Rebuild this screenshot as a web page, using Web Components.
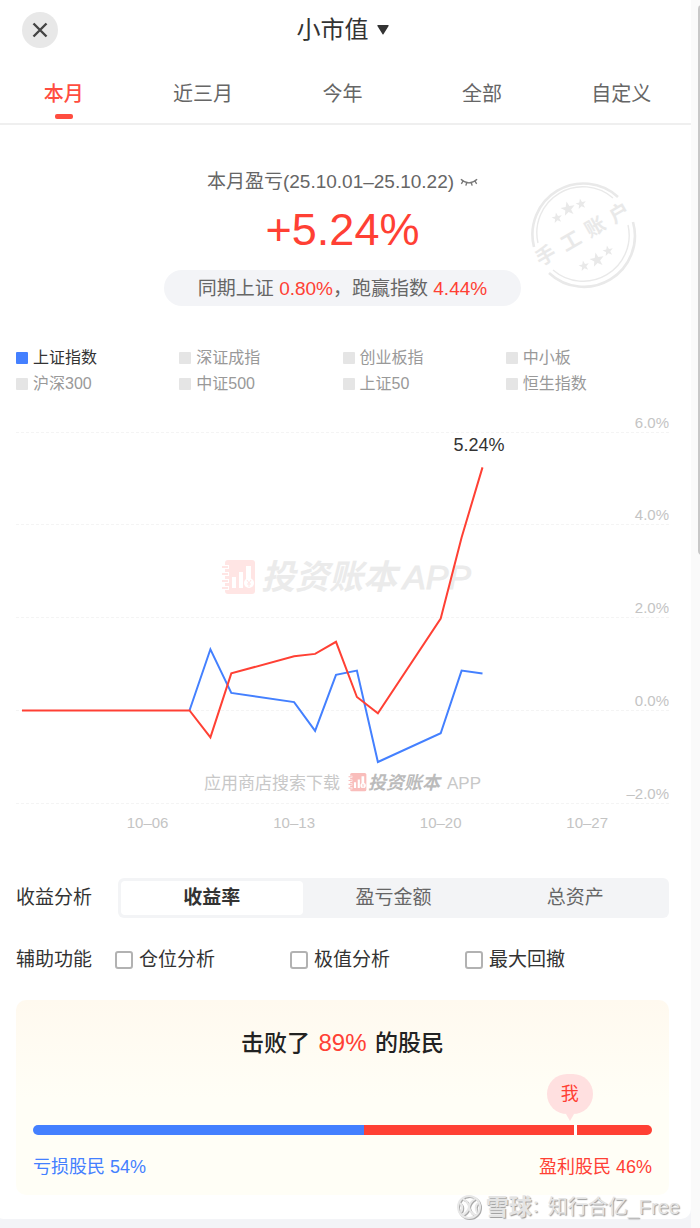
<!DOCTYPE html>
<html lang="zh-CN">
<head>
<meta charset="utf-8">
<meta name="viewport" content="width=device-width, initial-scale=1">
<title>小市值</title>
<style>
    html, body {
        margin: 0;
    }
    body {
        min-height: 100vh;
        display: grid;
        grid-template-columns: 1fr 9px;
        background: #f3f4f7;
        color: #333;
        font: 19px/28px "Liberation Sans", "Noto Sans CJK SC", sans-serif;
    }
</style>
</head>
<body>
<account-page>
    <page-header>小市值</page-header>
    <range-tabs>
        <range-tab active>本月</range-tab>
        <range-tab>近三月</range-tab>
        <range-tab>今年</range-tab>
        <range-tab>全部</range-tab>
        <range-tab>自定义</range-tab>
    </range-tabs>
    <profit-summary>
        <span slot="period">本月盈亏(25.10.01–25.10.22)</span>
        <span slot="value">+5.24%</span>
        同期上证 <b>0.80%</b>，跑赢指数 <b>4.44%</b>
    </profit-summary>
    <index-legend>
        <index-item active>上证指数</index-item>
        <index-item>深证成指</index-item>
        <index-item>创业板指</index-item>
        <index-item>中小板</index-item>
        <index-item>沪深300</index-item>
        <index-item>中证500</index-item>
        <index-item>上证50</index-item>
        <index-item>恒生指数</index-item>
    </index-legend>
    <profit-chart></profit-chart>
    <option-row gap="wide">
        <span slot="label">收益分析</span>
        <segment-group>
            <segment-item active>收益率</segment-item>
            <segment-item>盈亏金额</segment-item>
            <segment-item>总资产</segment-item>
        </segment-group>
    </option-row>
    <option-row>
        <span slot="label">辅助功能</span>
        <check-group>
            <check-option>仓位分析</check-option>
            <check-option>极值分析</check-option>
            <check-option>最大回撤</check-option>
        </check-group>
    </option-row>
    <rank-card>
        <span slot="title">击败了 <b>89%</b> 的股民</span>
        <span slot="loss">亏损股民 54%</span>
        <span slot="gain">盈利股民 46%</span>
    </rank-card>
</account-page>
<scroll-rail></scroll-rail>
<source-mark>知行合亿_Free</source-mark>

<script>
function define(name, html, setup) {
    const template = document.createElement("template");
    template.innerHTML = html;

    customElements.define(name, class extends HTMLElement {
        constructor() {
            super();
            this.attachShadow({mode: "open"});
            this.shadowRoot.appendChild(template.content.cloneNode(true));
        }

        connectedCallback() {
            if (setup) setup(this, this.shadowRoot);
        }
    });
}

// only one child of the group is active at a time
function selectOne(host) {
    host.addEventListener("click", (event) => {
        const item = event.target.closest(host.localName + " > *");
        if (!item) return;
        for (const child of host.children) {
            child.toggleAttribute("active", child === item);
        }
    });
}

define("account-page", /* html */`
    <style>
        :host {
            display: block;
            align-self: start;
            margin-left: -6px;
            padding-bottom: 24px;
            background: white;
            border-radius: 0 0 10px 10px;
        }
    </style>
    <slot></slot>
`);

define("page-header", /* html */`
    <style>
        :host {
            display: grid;
            grid-template-columns: 36px 1fr 36px;
            align-items: center;
            height: 60px;
            padding: 0 28px;
        }
        button {
            font: inherit;
            color: inherit;
            border: none;
            padding: 0;
            cursor: pointer;
        }
        .close {
            width: 36px;
            height: 36px;
            border-radius: 50%;
            background: #e8e8e8;
            display: grid;
            place-items: center;
        }
        .title {
            justify-self: center;
            display: flex;
            align-items: center;
            gap: 8px;
            background: none;
            font-size: 24px;
        }
    </style>
    <button class="close" aria-label="关闭">
        <svg width="16" height="16" viewBox="0 0 16 16" fill="none" stroke="#444" stroke-width="2.4"><path d="M1.5 1.5 14.5 14.5M14.5 1.5 1.5 14.5"/></svg>
    </button>
    <button class="title">
        <slot></slot>
        <svg width="12" height="10" viewBox="0 0 12 10" fill="#333"><path d="M1 0h10q1 0 .6 1L6.6 9q-.6 1-1.2 0L.4 1Q0 0 1 0z"/></svg>
    </button>
`);

define("range-tabs", /* html */`
    <style>
        :host {
            display: grid;
            grid-template-columns: repeat(5, 1fr);
            border-bottom: 2px solid #efefef;
        }
    </style>
    <slot></slot>
`, selectOne);

define("range-tab", /* html */`
    <style>
        :host {
            display: block;
            color: #666;
        }
        :host([active]) {
            color: #ff4d40;
            font-weight: 500;
        }
        button {
            width: 100%;
            display: flex;
            flex-direction: column;
            align-items: center;
            gap: 6px;
            padding: 20px 0 4px;
            border: none;
            background: none;
            font: inherit;
            font-size: 20px;
            line-height: 28px;
            color: inherit;
        }
        i {
            width: 18px;
            height: 5px;
            border-radius: 2px;
        }
        :host([active]) i {
            background: #ff4d40;
        }
    </style>
    <button><slot></slot><i></i></button>
`);

define("profit-summary", /* html */`
    <style>
        :host {
            display: flex;
            flex-direction: column;
            align-items: center;
            position: relative;
            padding: 43px 22px 0;
            color: #666;
        }
        .period {
            display: flex;
            align-items: center;
            gap: 6px;
        }
        .value {
            margin: 4px 0 10px;
            font-size: 45px;
            line-height: 60px;
            color: #ff4034;
        }
        .compare {
            padding: 5px 34px 3px;
            border-radius: 18px;
            background: #f3f4f7;
        }
        ::slotted(b) {
            font-weight: 400;
            color: #ff4034;
        }
        .stamp {
            position: absolute;
            top: 54px;
            right: 53px;
            fill: #e9e9e9;
        }
        .stamp text {
            font: 700 20px "Noto Sans CJK SC", sans-serif;
        }
        .ring {
            fill: none;
            stroke: #e9e9e9;
        }
    </style>
    <div class="period">
        <slot name="period"></slot>
        <svg width="18" height="12" viewBox="0 0 20 12" fill="none" stroke="#777" stroke-width="1.5"><path d="M1 3Q10 11 19 3M3.500 4.800 1.500 8M7.500 6.500 6.500 10M12.500 6.500 13.500 10M16.500 4.800 18.500 8"/></svg>
    </div>
    <div class="value"><slot name="value"></slot></div>
    <div class="compare"><slot></slot></div>
    <svg class="stamp" width="110" height="110" viewBox="-55 -55 110 110">
        <g class="ring">
            <path stroke-width="2.6" d="M35-37A51 51 0 0 0-49 13M50-12A51 51 0 0 1-34 39"/>
            <path stroke-width="1.400" d="M30-36A46 46 0 0 0-45 9M45-9A46 46 0 0 1-30 36"/>
        </g>
        <g transform="rotate(-30)"><text y="7" x="-53 -24 4 32">手工账户</text></g>
        <g id="stars"></g>
    </svg>
`, (host, root) => {
    const stars = [[-26, -16, 5.5], [-15, -25, 7.5], [-2, -30, 5.5], [1, 32, 5.5], [14, 26, 7.5], [25, 17, 5.5]];
    root.querySelector("#stars").innerHTML = stars.map(([x, y, r]) => {
        const points = [];
        for (let i = 0; i < 10; i++) {
            const radius = i % 2 ? r * 0.42 : r;
            const angle = i * Math.PI / 5 - Math.PI / 2 - 0.2;
            points.push((x + radius * Math.cos(angle)).toFixed(1) + "," + (y + radius * Math.sin(angle)).toFixed(1));
        }
        return `<polygon points="${points.join(" ")}"/>`;
    }).join("");
});

define("index-legend", /* html */`
    <style>
        :host {
            display: grid;
            grid-template-columns: repeat(4, 1fr);
            margin: 39px 22px 9px;
        }
    </style>
    <slot></slot>
`);

define("index-item", /* html */`
    <style>
        :host {
            display: block;
            color: #999;
        }
        :host([active]) {
            color: #333;
        }
        button {
            display: flex;
            align-items: center;
            gap: 5px;
            padding: 0;
            border: none;
            background: none;
            font: inherit;
            font-size: 16px;
            line-height: 26px;
            color: inherit;
        }
        i {
            width: 12px;
            height: 12px;
            border-radius: 1px;
            background: #e5e5e5;
        }
        :host([active]) i {
            background: #4480ff;
        }
    </style>
    <button><i></i><slot></slot></button>
`, (host, root) => {
    root.querySelector("button").addEventListener("click", () => host.toggleAttribute("active"));
});

const logo = `
    <path d="M7 0h24q3 0 3 3v28q0 3-3 3H7q-3 0-3-3V3q0-3 3-3z"/>
    <g fill="none" stroke="white" stroke-width="4"><path d="M3 7h5M3 14h5M3 21h5M3 28h5"/></g>
    <g fill="none" stroke="currentColor" stroke-width="2"><path d="M1 7h6M1 14h6M1 21h6M1 28h6"/></g>
    <g fill="white"><path d="M11 17h4v11h-4zM18 12h4v16h-4zM25 6h5v14h-5z"/><circle cx="28" cy="23" r="5"/></g>
    <path fill="none" stroke="currentColor" d="m26 20 2 3 2-3M28 23v4M26 24h4"/>
`;

define("profit-chart", /* html */`
    <style>
        :host {
            display: block;
            margin: 0 22px;
        }
        svg {
            display: block;
            width: 100%;
            height: auto;
        }
        .grid {
            stroke: #f4f4f4;
            stroke-dasharray: 3 2;
        }
        .axis {
            font-size: 15px;
            fill: #c4c4c4;
        }
        .line {
            fill: none;
            stroke-width: 2;
        }
        .last {
            font-size: 18px;
            fill: #333;
            text-anchor: middle;
        }
        .brand {
            font-weight: 700;
            font-style: italic;
        }
    </style>
    <svg viewBox="0 0 653 434">
        <g id="grid"></g>
        <g fill="#ebebeb" font-size="34">
            <g transform="translate(205 154)" fill="#ffe5e4" color="#ffe5e4">${logo}</g>
            <text class="brand" x="245" y="183">投资账本</text>
            <text x="387" y="183" font-style="italic" stroke="#ebebeb">APP</text>
        </g>
        <g fill="#c8c8c8" font-size="17">
            <text x="188" y="383">应用商店搜索下载</text>
            <g transform="translate(332 367) scale(.54)" fill="#f9bdbb" color="#f9bdbb">${logo}</g>
            <text class="brand" x="352" y="383" font-size="18" fill="#bbb">投资账本</text>
            <text x="431" y="383">APP</text>
        </g>
        <g id="lines"></g>
    </svg>
`, (host, root) => {
    // [day of October, change in %]
    const index = [[8, 0], [9, 1.32], [10, 0.38], [13, 0.18], [14, -0.44], [15, 0.77], [16, 0.86], [17, -1.11], [20, -0.49], [21, 0.86], [22, 0.8]];
    const account = [[0, 0], [8, 0], [9, -0.58], [10, 0.8], [13, 1.17], [14, 1.22], [15, 1.48], [16, 0.29], [17, -0.06], [20, 1.98], [21, 3.73], [22, 5.24]];
    const x = (day) => 6 + day * 628 / 30;
    const y = (value) => 304.5 - value * 46.4;

    let grid = "";
    for (const value of [6, 4, 2, 0, -2]) {
        const label = value.toFixed(1).replace("-", "–") + "%";
        const line = Math.floor(y(value)) + 0.5;
        grid += `<path class="grid" d="M0 ${line}H653"/>`;
        grid += `<text class="axis" x="653" y="${line - 5}" text-anchor="end">${label}</text>`;
    }
    for (const day of [6, 13, 20, 27]) {
        const label = "10–" + String(day).padStart(2, "0");
        grid += `<text class="axis" x="${x(day)}" y="422" text-anchor="middle">${label}</text>`;
    }
    root.querySelector("#grid").innerHTML = grid;

    const line = (data, color) => {
        const points = data.map(([day, value]) => x(day).toFixed(1) + "," + y(value).toFixed(1));
        return `<polyline class="line" stroke="${color}" points="${points.join(" ")}"/>`;
    };
    root.querySelector("#lines").innerHTML = line(index, "#4480ff") + line(account, "#ff4034") +
        `<text class="last" x="463" y="45">5.24%</text>`;
});

define("option-row", /* html */`
    <style>
        :host {
            display: flex;
            align-items: center;
            gap: 23px;
            margin: 28px 22px 26px;
        }
        :host([gap="wide"]) {
            gap: 26px;
            margin-top: 38px;
        }
        ::slotted([slot="label"]) {
            flex: none;
        }
    </style>
    <slot name="label"></slot>
    <slot></slot>
`);

define("segment-group", /* html */`
    <style>
        :host {
            flex: 1;
            display: grid;
            grid-template-columns: repeat(3, 1fr);
            padding: 3px;
            border-radius: 6px;
            background: #f3f4f6;
        }
    </style>
    <slot></slot>
`, selectOne);

define("segment-item", /* html */`
    <style>
        :host {
            display: block;
            color: #666;
        }
        button {
            width: 100%;
            padding: 3px 0;
            border: none;
            border-radius: 4px;
            background: none;
            font: inherit;
            color: inherit;
        }
        :host([active]) button {
            background: white;
            color: #333;
            font-weight: 700;
        }
    </style>
    <button><slot></slot></button>
`);

define("check-group", /* html */`
    <style>
        :host {
            display: flex;
            gap: 75px;
        }
    </style>
    <slot></slot>
`);

define("check-option", /* html */`
    <style>
        :host {
            display: block;
        }
        label {
            display: flex;
            align-items: center;
            gap: 6px;
        }
        input {
            appearance: none;
            width: 18px;
            height: 18px;
            margin: 0;
            border: 2px solid #b2b2b2;
            border-radius: 3px;
            background: white;
        }
        input:checked {
            background: #4480ff;
        }
    </style>
    <label><input type="checkbox"><slot></slot></label>
`);

define("rank-card", /* html */`
    <style>
        :host {
            display: block;
            margin: 0 22px;
            padding: 29px 17px 16px;
            border-radius: 10px;
            background: linear-gradient(#fff9ef, #fffef6 50%);
        }
        .title {
            font-size: 23px;
            font-weight: 500;
            text-align: center;
            color: #222;
        }
        .bar {
            position: relative;
            display: flex;
            height: 10px;
            margin: 68px 0 20px;
        }
        .loss {
            flex: 534;
            border-radius: 5px 0 0 5px;
            background: #4480ff;
        }
        .gain {
            flex: 466;
            border-radius: 0 5px 5px 0;
            background: #ff4034;
        }
        .mark {
            position: absolute;
            left: 87.4%;
            width: 3px;
            height: 10px;
            background: white;
        }
        .me {
            position: absolute;
            left: 83%;
            bottom: 21px;
            width: 46px;
            border-radius: 20px;
            background: #ffe0e0;
            color: #ff4034;
            font-size: 18px;
            line-height: 40px;
            text-align: center;
        }
        .me::after {
            content: "";
            position: absolute;
            top: 100%;
            left: 19px;
            border: 4px solid transparent;
            border-top: 7px solid #ffe0e0;
            border-bottom: none;
        }
        .ends {
            display: flex;
            justify-content: space-between;
            font-size: 18px;
            line-height: 24px;
            color: #ff4034;
        }
        .ends slot[name="loss"] {
            color: #4480ff;
        }
    </style>
    <div class="title"><slot name="title"></slot></div>
    <div class="bar">
        <div class="loss"></div>
        <div class="gain"></div>
        <div class="mark"></div>
        <div class="me">我</div>
    </div>
    <div class="ends">
        <slot name="loss"></slot>
        <slot name="gain"></slot>
    </div>
`, (host) => {
    const percent = host.querySelector("b");
    percent.style.margin = "0 2px";
    percent.style.fontWeight = 400;
    percent.style.fontSize = "24px";
    percent.style.color = "#ff4034";
});

define("scroll-rail", /* html */`
    <style>
        :host {
            display: block;
            padding: 5px 0 0 7px;
            background: #fafafa;
            overflow: hidden;
        }
        div {
            width: 8px;
            height: 45%;
            border-radius: 4px;
            background: #c8c8c8;
        }
    </style>
    <div></div>
`);

define("source-mark", /* html */`
    <style>
        :host {
            position: absolute;
            right: 20px;
            bottom: 7px;
            display: flex;
            align-items: center;
            font-size: 20px;
            color: #e4e4e4;
            text-shadow: 1px 1px 1px #999;
        }
        svg {
            margin-right: 4px;
            filter: drop-shadow(1px 1px 0 #aaa);
        }
        b {
            font-size: 23px;
        }
        span {
            font-size: 16px;
        }
    </style>
    <svg width="26" height="26" viewBox="0 0 26 26" fill="none" stroke="#e8e8e8" stroke-width="2"><circle cx="13" cy="13" r="11"/><path d="M7 5q5 2 6 8t6 8M19 5q-5 3-6 8t-6 8M4 9q4 4 1 9M22 9q-4 4-1 9"/></svg>
    <b>雪球</b><span>：</span><slot></slot>
`);
</script>
</body>
</html>
